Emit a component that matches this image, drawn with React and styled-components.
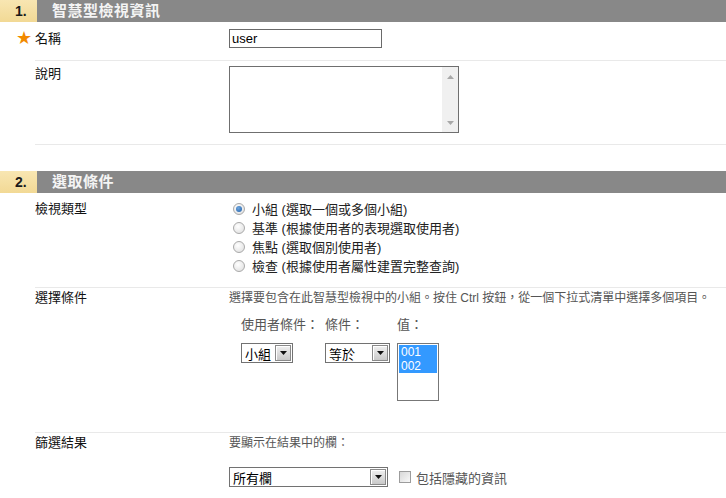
import React from "react";
import styled, { createGlobalStyle } from "styled-components";

const GlobalStyle = createGlobalStyle`
  body {
    margin: 0;
    background: #ffffff;
    font-family: "Liberation Sans", "Noto Sans CJK TC", sans-serif;
    color: #111;
  }
`;

function DropArrow() {
  return (
    <svg width="7" height="4" viewBox="0 0 7 4">
      <path d="M0 0h7L3.5 4z" fill="#111" />
    </svg>
  );
}

function ScrollArrow({ down }) {
  return (
    <svg width="7" height="4" viewBox="0 0 7 4">
      <path d={down ? "M0 0h7L3.5 4z" : "M0 4h7L3.5 0z"} fill="#a8a8a8" />
    </svg>
  );
}

function Section({ number, title, children, first }) {
  return (
    <SectionWrap $first={first}>
      <SectionHeader>
        <SectionNumber>{number}</SectionNumber>
        <SectionTitle>{title}</SectionTitle>
      </SectionHeader>
      {children}
    </SectionWrap>
  );
}

function Select({ width, value }) {
  return (
    <SelectBox $width={width}>
      <SelectValue>{value}</SelectValue>
      <SelectButton>
        <DropArrow />
      </SelectButton>
    </SelectBox>
  );
}

const viewTypes = [
  { label: "小組 (選取一個或多個小組)", checked: true },
  { label: "基準 (根據使用者的表現選取使用者)" },
  { label: "焦點 (選取個別使用者)" },
  { label: "檢查 (根據使用者屬性建置完整查詢)" },
];

export default function App() {
  return (
    <>
      <GlobalStyle />
      <Page>
        <Section number="1." title="智慧型檢視資訊" first>
          <Row $pad="7px 0 12px" $align="center">
            <Label>
              <Star>★</Star>名稱
            </Label>
            <TextInput>user</TextInput>
          </Row>
          <Row $pad="5px 0 11px">
            <Label>說明</Label>
            <TextArea>
              <ScrollBar>
                <ScrollArrow />
                <ScrollArrow down />
              </ScrollBar>
            </TextArea>
          </Row>
        </Section>

        <Section number="2." title="選取條件">
          <Row $pad="6px 0 12px">
            <Label $lh="19px">檢視類型</Label>
            <RadioList>
              {viewTypes.map((t) => (
                <RadioItem key={t.label}>
                  <Radio $checked={t.checked} />
                  {t.label}
                </RadioItem>
              ))}
            </RadioList>
          </Row>
          <Row $pad="2px 0 31px">
            <Label>選擇條件</Label>
            <div>
              <Hint>
                選擇要包含在此智慧型檢視中的小組。按住 Ctrl 按鈕，從一個下拉式清單中選擇多個項目。
              </Hint>
              <Criteria>
                <FieldLabel>使用者條件：</FieldLabel>
                <FieldLabel>條件：</FieldLabel>
                <FieldLabel>值：</FieldLabel>
                <Select width="52px" value="小組" />
                <Select width="65px" value="等於" />
                <ListBox>
                  <ListOption>001</ListOption>
                  <ListOption>002</ListOption>
                </ListBox>
              </Criteria>
            </div>
          </Row>
          <Row $pad="2px 0 20px" $last>
            <Label>篩選結果</Label>
            <div>
              <Hint>要顯示在結果中的欄：</Hint>
              <FilterLine>
                <Select width="159px" value="所有欄" />
                <CheckLabel>
                  <CheckBox />
                  包括隱藏的資訊
                </CheckLabel>
              </FilterLine>
            </div>
          </Row>
        </Section>
      </Page>
    </>
  );
}

/* The CSS */
const Page = styled.div`
  width: 726px;
`;

const SectionWrap = styled.div`
  margin-top: ${(p) => (p.$first ? "0" : "26px")};
`;

const SectionHeader = styled.div`
  display: flex;
  height: 22px;
`;

const SectionNumber = styled.div`
  width: 22px;
  padding-left: 15px;
  background: linear-gradient(#f8e6b2, #f2d995);
  color: #1a1a1a;
  font-size: 14px;
  font-weight: bold;
  line-height: 22px;
`;

const SectionTitle = styled.div`
  flex: 1;
  padding-left: 15px;
  background: #888888;
  color: #f4f4f4;
  font-size: 15px;
  font-weight: bold;
  letter-spacing: 0.5px;
  line-height: 22px;
`;

const Row = styled.div`
  display: grid;
  grid-template-columns: 194px 1fr;
  align-items: ${(p) => p.$align || "start"};
  margin-left: 35px;
  padding: ${(p) => p.$pad};
  border-bottom: ${(p) => (p.$last ? "none" : "1px solid #e9e9e9")};
`;

const Label = styled.div`
  position: relative;
  font-size: 13px;
  line-height: ${(p) => p.$lh || "16px"};
  color: #111;
`;

const Star = styled.span`
  position: absolute;
  left: -19px;
  top: -3px;
  color: #f28a00;
  font-size: 18px;
  line-height: 20px;
  font-family: "DejaVu Sans", sans-serif;
`;

const TextInput = styled.div`
  box-sizing: border-box;
  width: 153px;
  height: 19px;
  padding-left: 2px;
  border: 1px solid #6a6a6a;
  font-size: 13px;
  line-height: 17px;
  color: #000;
`;

const TextArea = styled.div`
  box-sizing: border-box;
  display: flex;
  justify-content: flex-end;
  width: 230px;
  height: 67px;
  border: 1px solid #6f6f6f;
`;

const ScrollBar = styled.div`
  display: flex;
  flex-direction: column;
  justify-content: space-between;
  align-items: center;
  width: 16px;
  padding: 8px 0 7px;
  background: #f0f0f0;
`;

const RadioList = styled.div`
  display: flex;
  flex-direction: column;
  padding-left: 4px;
`;

const RadioItem = styled.div`
  display: flex;
  align-items: center;
  gap: 7px;
  height: 19px;
  font-size: 13px;
  color: #222;
`;

const Radio = styled.span`
  box-sizing: border-box;
  display: flex;
  align-items: center;
  justify-content: center;
  width: 12px;
  height: 12px;
  border-radius: 50%;
  border: 1px solid #a9a9a9;
  background: radial-gradient(circle at 40% 35%, #ffffff, #dcdcdc);

  &::after {
    content: "";
    display: ${(p) => (p.$checked ? "block" : "none")};
    width: 6px;
    height: 6px;
    border-radius: 50%;
    background: radial-gradient(circle at 40% 35%, #6fa6de, #1f5fa8);
  }
`;

const Hint = styled.div`
  font-size: 12px;
  line-height: 16px;
  color: #555;
`;

const Criteria = styled.div`
  display: grid;
  grid-template-columns: 84px 72px auto;
  align-items: start;
  row-gap: 10px;
  margin: 11px 0 0 12px;
`;

const FieldLabel = styled.div`
  font-size: 13px;
  line-height: 16px;
  color: #555;
`;

const SelectBox = styled.div`
  box-sizing: border-box;
  display: flex;
  align-items: center;
  justify-content: space-between;
  width: ${(p) => p.$width};
  height: 20px;
  padding: 0 1px 0 3px;
  border: 1px solid #727272;
  background: #fff;
`;

const SelectValue = styled.span`
  font-size: 13px;
  color: #000;
`;

const SelectButton = styled.span`
  box-sizing: border-box;
  display: flex;
  align-items: center;
  justify-content: center;
  width: 16px;
  height: 16px;
  border: 1px solid #8a8a8a;
  box-shadow: inset 1px 1px 0 #ffffff;
  background: linear-gradient(#f0f0f0, #c9c9c9);
`;

const ListBox = styled.div`
  box-sizing: border-box;
  width: 42px;
  height: 58px;
  padding: 1px;
  border: 1px solid #777;
`;

const ListOption = styled.div`
  height: 14px;
  padding-left: 2px;
  background: #3399ff;
  color: #fff;
  font-size: 12px;
  line-height: 14px;
`;

const FilterLine = styled.div`
  display: flex;
  align-items: center;
  margin-top: 16px;
`;

const CheckLabel = styled.div`
  display: flex;
  align-items: center;
  gap: 5px;
  margin-left: 11px;
  font-size: 13px;
  color: #555;
`;

const CheckBox = styled.span`
  box-sizing: border-box;
  width: 12px;
  height: 12px;
  border: 1px solid #9c9c9c;
  background: linear-gradient(135deg, #d8d8d8, #f8f8f8);
`;
